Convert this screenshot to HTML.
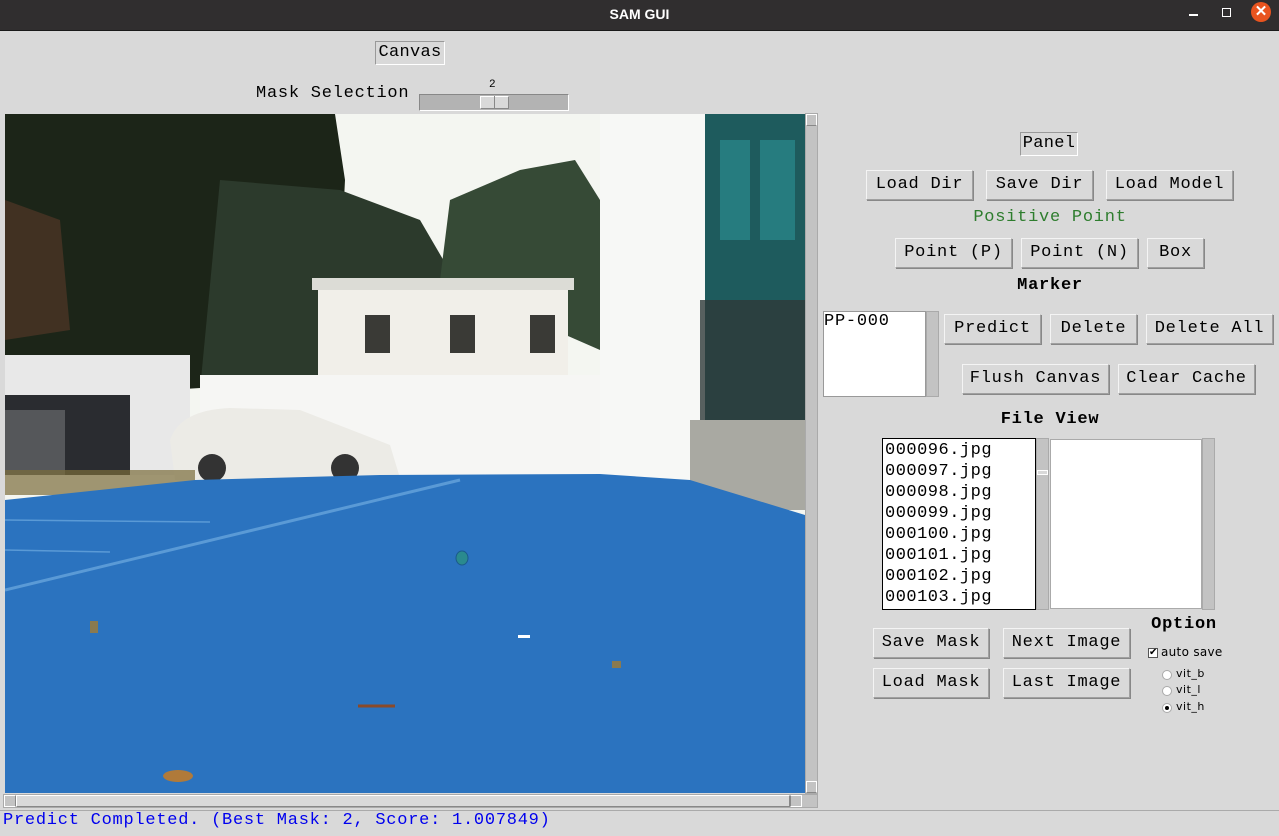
<!DOCTYPE html>
<html><head><style>
*{margin:0;padding:0;box-sizing:border-box}
body{width:1279px;height:836px;background:#d9d9d9;position:relative;overflow:hidden;font-family:"Liberation Mono","DejaVu Sans Mono",monospace;font-size:17px;letter-spacing:0.75px;color:#000}
.a{position:absolute;white-space:pre}
.btn{position:absolute;border:1px solid #a0a0a0;border-top-color:#f4f4f4;border-left-color:#f4f4f4;box-shadow:1px 1px 0 #888;background:#d9d9d9;text-align:center;line-height:28px}
.lb{position:absolute;text-align:center}
.sb{position:absolute;background:#c3c3c3;border:1px solid #aaa}
</style></head><body>
<div class="a" style="left:0;top:0;width:1279px;height:31px;background:#302e2f;border-bottom:1px solid #1a1a1a"></div>
<div class="a" style="left:0;top:6px;width:1279px;text-align:center;color:#fff;font-family:'Liberation Sans',sans-serif;font-weight:bold;font-size:14px;letter-spacing:0">SAM GUI</div>
<div class="a" style="left:1189px;top:14px;width:9px;height:2px;background:#fff"></div>
<div class="a" style="left:1222px;top:8px;width:9px;height:9px;border:1.5px solid #fff"></div>
<div class="a" style="left:1251px;top:2px;width:20px;height:20px;border-radius:50%;background:#e9541f;color:#fff;font-family:'Liberation Sans';font-size:15px;text-align:center;line-height:20px;font-weight:bold;letter-spacing:0">✕</div>

<div class="a" style="left:375px;top:41px;width:70px;height:24px;border:1px solid #999;border-bottom-color:#fff;border-right-color:#fff;line-height:22px;text-align:center;letter-spacing:0.3px">Canvas</div>
<div class="a" style="left:256px;top:84px">Mask Selection</div>
<div class="a" style="left:489px;top:79px;font-size:11px;letter-spacing:0">2</div>
<div class="a" style="left:419px;top:94px;width:150px;height:17px;background:#b3b3b3;border:1px solid #888;border-bottom-color:#fff;border-right-color:#fff"></div>
<div class="a" style="left:480px;top:96px;width:29px;height:13px;background:#d9d9d9;border:1px solid #fff;border-bottom-color:#888;border-right-color:#888"></div>
<div class="a" style="left:494px;top:96px;width:1px;height:13px;background:#888"></div>

<svg class="a" style="left:5px;top:114px" width="800" height="679" viewBox="5 114 800 679">
<rect x="5" y="114" width="800" height="679" fill="#f4f6f1"/>
<path d="M5 114 H335 L345 180 L340 280 L380 340 L330 380 L5 400Z" fill="#1c2518"/>
<path d="M220 180 L340 190 L420 220 L455 280 L450 380 L200 390Z" fill="#2c3a2c"/>
<path d="M5 200 L60 220 L70 330 L5 340Z" fill="#5a3a2a" opacity="0.6"/>
<path d="M450 200 L520 170 L575 160 L600 200 L600 350 L440 280Z" fill="#364a36"/>
<rect x="600" y="114" width="105" height="370" fill="#f7f8f6"/>
<rect x="705" y="114" width="100" height="310" fill="#1e5b5d"/>
<path d="M720 140 H750 V240 H720Z M760 140 H795 V240 H760Z" fill="#2a8a8e" opacity="0.7"/>
<rect x="700" y="300" width="105" height="120" fill="#2e3a3a" opacity="0.8"/>
<rect x="690" y="420" width="115" height="90" fill="#a9a9a2"/>
<rect x="318" y="280" width="250" height="100" fill="#f1efe9"/>
<rect x="312" y="278" width="262" height="12" fill="#dcdcd6"/>
<rect x="365" y="315" width="25" height="38" fill="#3a3a36"/>
<rect x="450" y="315" width="25" height="38" fill="#3a3a36"/>
<rect x="530" y="315" width="25" height="38" fill="#3a3a36"/>
<rect x="200" y="375" width="400" height="100" fill="#f6f6f4"/>
<rect x="5" y="355" width="185" height="120" fill="#e8e8e8"/>
<rect x="5" y="395" width="125" height="80" fill="#2a2c30"/>
<rect x="5" y="410" width="60" height="65" fill="#55575a"/>
<path d="M170 440 Q180 410 230 408 L300 410 L390 445 L400 478 L175 480Z" fill="#ecebe6"/>
<circle cx="212" cy="468" r="14" fill="#333"/><circle cx="345" cy="468" r="14" fill="#333"/>
<rect x="5" y="470" width="190" height="25" fill="#7a6c3a" opacity="0.7"/>
<path d="M5 500 L195 480 L380 475 L600 474 L690 480 L805 515 V793 H5Z" fill="#2b73bf"/>
<path d="M5 590 L460 480" stroke="#5a9ad6" stroke-width="3"/>
<path d="M5 550 L110 552 M5 520 L210 522" stroke="#5a9ad6" stroke-width="1.5"/>
<ellipse cx="462" cy="558" rx="6" ry="7" fill="#2a8a8e" stroke="#1b5a8a"/>
<ellipse cx="178" cy="776" rx="15" ry="6" fill="#b07a3a"/>
<path d="M358 706 L395 706" stroke="#8a4a2a" stroke-width="3"/>
<rect x="518" y="635" width="12" height="3" fill="#fff"/>
<rect x="90" y="621" width="8" height="12" fill="#8a7a50"/>
<rect x="612" y="661" width="9" height="7" fill="#8a7a50"/>
</svg>

<div class="sb" style="left:805px;top:113px;width:13px;height:681px;background:#c3c3c3"></div>
<div class="a" style="left:806px;top:114px;width:11px;height:12px;border:1px solid #fff;border-bottom-color:#888"></div>
<div class="a" style="left:806px;top:781px;width:11px;height:12px;border:1px solid #fff;border-bottom-color:#888"></div>
<div class="sb" style="left:3px;top:794px;width:815px;height:14px;background:#c3c3c3"></div>
<div class="a" style="left:4px;top:795px;width:12px;height:12px;border:1px solid #fff;border-right-color:#888"></div>
<div class="a" style="left:16px;top:795px;width:774px;height:12px;background:#d9d9d9;border:1px solid #fff;border-bottom-color:#888;border-right-color:#888"></div>
<div class="a" style="left:790px;top:795px;width:12px;height:12px;border:1px solid #fff;border-left-color:#888"></div>
<div class="a" style="left:0;top:810px;width:1279px;height:1px;background:#aaa"></div>
<div class="a" style="left:3px;top:811px;color:#0000ee">Predict Completed. (Best Mask: 2, Score: 1.007849)</div>

<div class="a" style="left:1020px;top:132px;width:58px;height:24px;border:1px solid #999;border-bottom-color:#fff;border-right-color:#fff;line-height:22px;text-align:center;letter-spacing:0.3px">Panel</div>
<div class="btn" style="left:866px;top:170px;width:107px;height:30px">Load Dir</div>
<div class="btn" style="left:986px;top:170px;width:107px;height:30px">Save Dir</div>
<div class="btn" style="left:1106px;top:170px;width:127px;height:30px">Load Model</div>
<div class="lb" style="left:930px;top:208px;width:240px;color:#2e7d2e">Positive Point</div>
<div class="btn" style="left:895px;top:238px;width:117px;height:30px">Point (P)</div>
<div class="btn" style="left:1021px;top:238px;width:117px;height:30px">Point (N)</div>
<div class="btn" style="left:1147px;top:238px;width:57px;height:30px">Box</div>
<div class="lb" style="left:990px;top:276px;width:120px;font-weight:bold">Marker</div>
<div class="a" style="left:823px;top:311px;width:103px;height:86px;background:#fff;border:1px solid #999"></div>
<div class="a" style="left:824px;top:312px">PP-000</div>
<div class="sb" style="left:926px;top:311px;width:13px;height:86px"></div>
<div class="btn" style="left:944px;top:314px;width:97px;height:30px">Predict</div>
<div class="btn" style="left:1050px;top:314px;width:87px;height:30px">Delete</div>
<div class="btn" style="left:1146px;top:314px;width:127px;height:30px">Delete All</div>
<div class="btn" style="left:962px;top:364px;width:147px;height:30px">Flush Canvas</div>
<div class="btn" style="left:1118px;top:364px;width:137px;height:30px">Clear Cache</div>
<div class="lb" style="left:970px;top:410px;width:160px;font-weight:bold">File View</div>
<div class="a" style="left:882px;top:438px;width:154px;height:172px;background:#fff;border:1px solid #000;line-height:21px;padding-left:2px;padding-top:1px;letter-spacing:0.5px;overflow:hidden">000096.jpg
000097.jpg
000098.jpg
000099.jpg
000100.jpg
000101.jpg
000102.jpg
000103.jpg</div>
<div class="sb" style="left:1036px;top:438px;width:13px;height:172px"></div>
<div class="a" style="left:1037px;top:470px;width:11px;height:5px;background:#d9d9d9;border:1px solid #fff"></div>
<div class="a" style="left:1050px;top:439px;width:152px;height:170px;background:#fff;border:1px solid #aaa"></div>
<div class="sb" style="left:1202px;top:438px;width:13px;height:172px"></div>
<div class="btn" style="left:873px;top:628px;width:116px;height:30px">Save Mask</div>
<div class="btn" style="left:1003px;top:628px;width:127px;height:30px">Next Image</div>
<div class="btn" style="left:873px;top:668px;width:116px;height:30px">Load Mask</div>
<div class="btn" style="left:1003px;top:668px;width:127px;height:30px">Last Image</div>
<div class="lb" style="left:1144px;top:615px;width:80px;font-weight:bold">Option</div>
<div class="a" style="left:1148px;top:648px;width:10px;height:10px;background:#fff;border:1px solid #555;font-size:10px;line-height:8px;font-family:'DejaVu Sans';letter-spacing:0">✔</div>
<div class="a" style="left:1161px;top:645px;font-family:'DejaVu Sans';font-size:12px;letter-spacing:0.3px">auto save</div>
<div class="a" style="left:1162px;top:670px;width:10px;height:10px;border-radius:50%;background:#fff;border:1px solid #aaa"></div>
<div class="a" style="left:1176px;top:667px;font-family:'DejaVu Sans';font-size:11px;letter-spacing:0.5px">vit_b</div>
<div class="a" style="left:1162px;top:686px;width:10px;height:10px;border-radius:50%;background:#fff;border:1px solid #aaa"></div>
<div class="a" style="left:1176px;top:683px;font-family:'DejaVu Sans';font-size:11px;letter-spacing:0.5px">vit_l</div>
<div class="a" style="left:1162px;top:703px;width:10px;height:10px;border-radius:50%;background:#fff;border:1px solid #aaa"></div>
<div class="a" style="left:1165px;top:706px;width:4px;height:4px;border-radius:50%;background:#000"></div>
<div class="a" style="left:1176px;top:700px;font-family:'DejaVu Sans';font-size:11px;letter-spacing:0.5px">vit_h</div>
</body></html>
